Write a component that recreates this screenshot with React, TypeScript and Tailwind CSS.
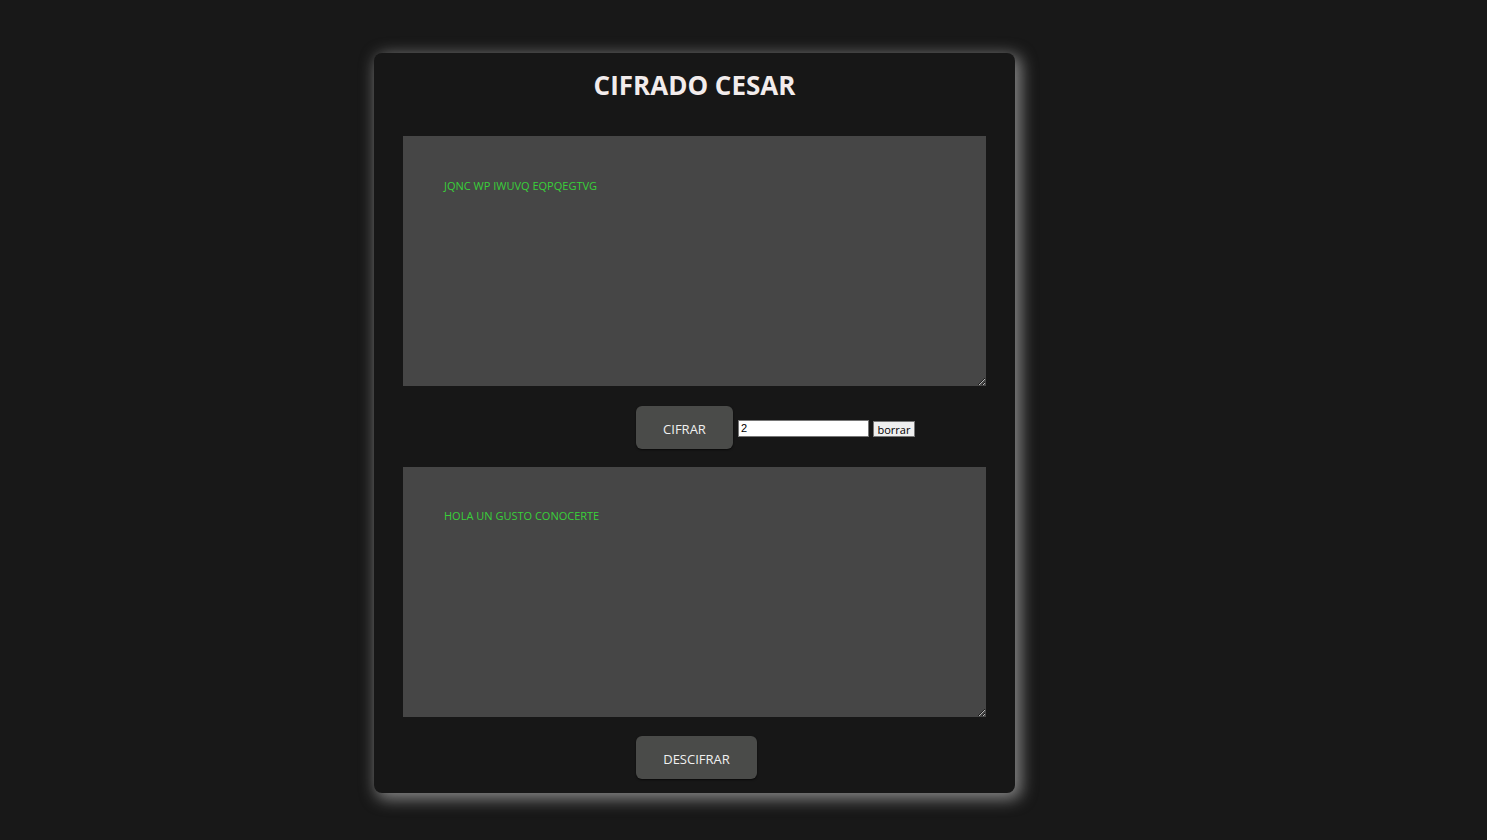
import { useState } from "react"

const font = { fontFamily: '"Open Sans", "Noto Sans", sans-serif' }

function shift(text: string, n: number) {
  return text.replace(/[A-Z]/g, (c) =>
    String.fromCharCode(((c.charCodeAt(0) - 65 + n + 26 * 10) % 26) + 65)
  )
}

export default function App() {
  const [plain, setPlain] = useState("HOLA UN GUSTO CONOCERTE")
  const [key, setKey] = useState("2")
  const [cipher, setCipher] = useState("JQNC WP IWUVQ EQPQEGTVG")

  return (
    <div className="min-h-[840px] bg-[#181818] pt-[53px]" style={font}>
      <div className="ml-[374px] flex h-[740px] w-[641px] flex-col rounded-lg bg-[#171717] px-[29px] shadow-[4px_4px_16px_2px_rgba(170,170,170,0.75)]">
        <h1 className="pt-[16px] text-center text-[26px] leading-[32px] font-bold text-[#f2ecec]">
          CIFRADO CESAR
        </h1>

        <textarea
          value={cipher}
          onChange={(e) => setCipher(e.target.value)}
          className="mt-[35px] h-[250px] w-[583px] bg-[#464646] px-[41px] pt-[42px] text-[11px] leading-[15px] text-[#39d139] outline-none"
        />

        <div className="mt-[20px] flex h-[43px] items-center pl-[233px]">
          <button
            onClick={() => setCipher(shift(plain, Number(key) || 0))}
            className="h-[43px] w-[97px] rounded-md bg-[#4a4b49] pt-[4px] text-[13px] text-[#f0f0f0] shadow-[0_1px_2px_rgba(0,0,0,0.6)]"
          >
            CIFRAR
          </button>
          <input
            value={key}
            onChange={(e) => setKey(e.target.value)}
            className="mt-[1px] ml-[5px] h-[17px] w-[131px] border border-[#767676] bg-white px-[2px] text-[11px] text-black outline-none"
            style={{ fontFamily: '"Liberation Sans", sans-serif' }}
          />
          <button
            onClick={() => {
              setKey("")
              setCipher("")
              setPlain("")
            }}
            className="mt-[2px] ml-[4px] h-[16px] w-[42px] border border-[#767676] bg-[#efefef] pt-[1px] text-[11px] leading-[14px] text-black"
          >
            borrar
          </button>
        </div>

        <textarea
          value={plain}
          onChange={(e) => setPlain(e.target.value)}
          className="mt-[18px] h-[250px] w-[583px] bg-[#464646] px-[41px] pt-[41px] text-[11px] leading-[15px] text-[#39d139] outline-none"
        />

        <div className="mt-[19px] flex pl-[233px]">
          <button
            onClick={() => setPlain(shift(cipher, -(Number(key) || 0)))}
            className="h-[43px] w-[121px] rounded-md bg-[#4a4b49] pt-[4px] text-[13px] text-[#f0f0f0] shadow-[0_1px_2px_rgba(0,0,0,0.6)]"
          >
            DESCIFRAR
          </button>
        </div>
      </div>
    </div>
  )
}
